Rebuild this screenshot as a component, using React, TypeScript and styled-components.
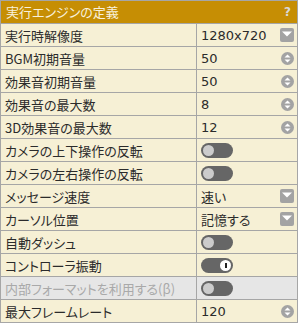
import styled, { createGlobalStyle } from "styled-components";

const GlobalStyle = createGlobalStyle`
  html, body {
    margin: 0;
    padding: 0;
    background: #ffffff;
  }
  body {
    font-family: "Noto Sans CJK JP", "Noto Sans", sans-serif;
  }
`;

type Kind = "select" | "spin" | "toggle";

type Row = {
  label: string;
  kind: Kind;
  value?: string;
  on?: boolean;
  disabled?: boolean;
};

const rows: Row[] = [
  { label: "実行時解像度", kind: "select", value: "1280x720" },
  { label: "BGM初期音量", kind: "spin", value: "50" },
  { label: "効果音初期音量", kind: "spin", value: "50" },
  { label: "効果音の最大数", kind: "spin", value: "8" },
  { label: "3D効果音の最大数", kind: "spin", value: "12" },
  { label: "カメラの上下操作の反転", kind: "toggle" },
  { label: "カメラの左右操作の反転", kind: "toggle" },
  { label: "メッセージ速度", kind: "select", value: "速い" },
  { label: "カーソル位置", kind: "select", value: "記憶する" },
  { label: "自動ダッシュ", kind: "toggle" },
  { label: "コントローラ振動", kind: "toggle", on: true },
  { label: "内部フォーマットを利用する(β)", kind: "toggle", disabled: true },
  { label: "最大フレームレート", kind: "spin", value: "120" },
];

const SelectIcon = () => (
  <svg width="14" height="14" viewBox="0 0 14 14">
    <rect x="0" y="0" width="14" height="14" rx="2" fill="#a3a3a3" />
    <path d="M2 3.5 H12 L7 8.5 Z" fill="#ffffff" />
  </svg>
);

const SpinIcon = () => (
  <svg width="13" height="13" viewBox="0 0 13 13">
    <circle cx="6.5" cy="6.5" r="6.5" fill="#a3a3a3" />
    <path d="M3.5 5.5 L6.5 2.5 L9.5 5.5 Z" fill="#ffffff" />
    <path d="M3.5 7.5 L9.5 7.5 L6.5 10.5 Z" fill="#ffffff" />
  </svg>
);

const App = () => {
  return (
    <>
      <GlobalStyle />
      <Panel>
        <Header>
          <Title>実行エンジンの定義</Title>
          <Help>?</Help>
        </Header>
        {rows.map((r) => (
          <Line key={r.label} $disabled={r.disabled}>
            <Label $disabled={r.disabled}>{r.label}</Label>
            <Value>
              {r.kind === "toggle" ? (
                <Toggle $on={r.on}>
                  <Knob $on={r.on} />
                </Toggle>
              ) : (
                <>
                  <ValueText>{r.value}</ValueText>
                  {r.kind === "select" ? <SelectIcon /> : <SpinIcon />}
                </>
              )}
            </Value>
          </Line>
        ))}
      </Panel>
    </>
  );
};

const Panel = styled.div`
  width: 296px;
  border: 1px solid #a6a6a6;
  background: #f6f0d5;
  display: flex;
  flex-direction: column;
`;

const Header = styled.div`
  height: 22px;
  background: #c68e04;
  display: flex;
  align-items: center;
  justify-content: space-between;
  padding: 0 6px 0 5px;
`;

const Title = styled.span`
  color: #f8f1dc;
  font-size: 13px;
  line-height: 22px;
  font-feature-settings: "palt";
`;

const Help = styled.span`
  color: #d9d9d9;
  font-family: "DejaVu Sans", sans-serif;
  font-weight: bold;
  font-size: 12px;
`;

const Line = styled.div<{ $disabled?: boolean }>`
  display: grid;
  grid-template-columns: 195px 1fr;
  height: 22px;
  border-top: 1px solid #a6a6a6;
  background: ${(p) => (p.$disabled ? "#e6e6e6" : "#f6f0d5")};
`;

const Label = styled.div<{ $disabled?: boolean }>`
  display: flex;
  align-items: center;
  padding-left: 4px;
  font-size: 13px;
  font-feature-settings: "palt";
  white-space: nowrap;
  overflow: hidden;
  color: ${(p) => (p.$disabled ? "#a9a9a9" : "#2b2b2b")};
`;

const Value = styled.div`
  display: flex;
  align-items: center;
  justify-content: space-between;
  border-left: 1px solid #a6a6a6;
  padding: 0 3px 0 4px;
`;

const ValueText = styled.span`
  font-size: 13px;
  color: #2b2b2b;
  font-family: "DejaVu Sans", "Noto Sans CJK JP", sans-serif;
  font-feature-settings: "palt";
`;

const Toggle = styled.div<{ $on?: boolean }>`
  width: 32px;
  height: 15px;
  border-radius: 8px;
  background: #666666;
  display: flex;
  align-items: center;
  justify-content: ${(p) => (p.$on ? "flex-end" : "flex-start")};
  padding: 0 2px;
  box-sizing: border-box;
`;

const Knob = styled.div<{ $on?: boolean }>`
  width: 11px;
  height: 11px;
  border-radius: 50%;
  background: ${(p) => (p.$on ? "#ffffff" : "#cccccc")};
  position: relative;
  &::after {
    content: "";
    display: ${(p) => (p.$on ? "block" : "none")};
    position: absolute;
    left: 5px;
    top: 3px;
    width: 1.5px;
    height: 5px;
    background: #222;
  }
`;

export default App;
